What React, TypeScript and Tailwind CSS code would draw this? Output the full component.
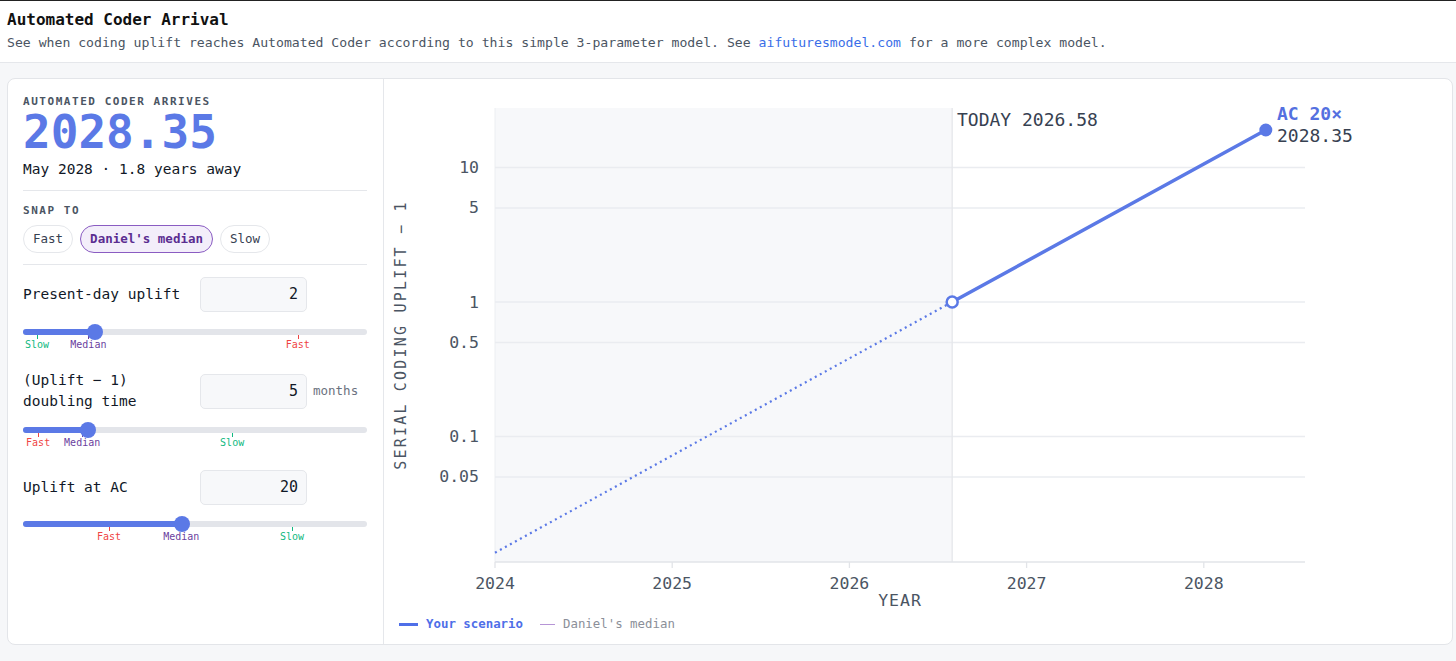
import React from 'react';

type TickKind = 'fast' | 'median' | 'slow';

const tickText: Record<TickKind, string> = {
  fast: 'text-[#ef4444]',
  median: 'text-[#6b3fa0]',
  slow: 'text-[#10b981]',
};
const tickBg: Record<TickKind, string> = {
  fast: 'bg-[#ef4444]',
  median: 'bg-[#6b3fa0]',
  slow: 'bg-[#10b981]',
};
const tickLabel: Record<TickKind, string> = { fast: 'Fast', median: 'Median', slow: 'Slow' };

type SliderProps = { value: number; ticks: { kind: TickKind; at: number }[]; className?: string };

function Slider({ value, ticks, className = 'mt-[11px]' }: SliderProps) {
  return (
    <div className={`relative h-[30px] ${className}`}>
      <div className="absolute left-0 right-0 top-[5px] h-[6px] rounded-full bg-[#e3e5ea]" />
      <div className="absolute left-0 top-[5px] h-[6px] rounded-full bg-[#5b79e6]" style={{ width: `${value}%` }} />
      {ticks.map((t) => (
        <div key={t.kind}>
          <div className={`absolute top-[11px] h-[4px] w-px ${tickBg[t.kind]}`} style={{ left: `${t.at}%` }} />
          <div
            className={`absolute top-[15px] -translate-x-1/2 text-[10px] leading-[12px] ${tickText[t.kind]}`}
            style={{ left: `${t.at}%` }}
          >
            {tickLabel[t.kind]}
          </div>
        </div>
      ))}
      <div
        className="absolute top-0 h-[16px] w-[16px] -translate-x-1/2 rounded-full bg-[#5b79e6]"
        style={{ left: `${value}%` }}
      />
    </div>
  );
}

function ParamRow({ label, value, unit }: { label: React.ReactNode; value: string; unit?: string }) {
  return (
    <div className="flex items-center">
      <div className="w-[177px] shrink-0 text-[14.5px] leading-[21px] text-[#111827]">{label}</div>
      <div className="flex h-[35px] w-[107px] items-center justify-end rounded-[5px] border border-[#e5e7eb] bg-[#f7f8fa] pr-[8px] text-[15px] text-[#111827]">
        {value}
      </div>
      {unit && <span className="ml-[6px] text-[12.5px] text-[#6b7280]">{unit}</span>}
    </div>
  );
}

const BLUE = '#5b79e6';
const xOf = (yr: number) => 495 + (yr - 2024) * 177.2;
const yOf = (v: number) => 302 - Math.log10(v) * 134.5;

function Chart() {
  const grid = [
    { v: 10, label: '10' },
    { v: 5, label: '5' },
    { v: 1, label: '1' },
    { v: 0.5, label: '0.5' },
    { v: 0.1, label: '0.1' },
    { v: 0.05, label: '0.05' },
  ];
  const years = [2024, 2025, 2026, 2027, 2028];
  const today = 2026.58;
  const tx = xOf(today);
  const startY = yOf(Math.pow(2, -((today - 2024) * 12) / 5));
  const endX = xOf(2028.35);
  const endY = yOf(19);

  return (
    <svg
      width={1068}
      height={531}
      viewBox="384 79 1068 531"
      className="block"
      style={{ fontFamily: '"DejaVu Sans Mono", monospace' }}
    >
      <rect x={495} y={108} width={tx - 495} height={454} fill="#f7f8fa" />
      <line x1={495} y1={108} x2={495} y2={562} stroke="#eceef1" strokeWidth={1} />
      {grid.map((g) => (
        <g key={g.label}>
          <line x1={495} y1={yOf(g.v)} x2={1305} y2={yOf(g.v)} stroke="#eaecf0" strokeWidth={1.3} />
          <text x={479} y={yOf(g.v)} textAnchor="end" dominantBaseline="central" fontSize={16.5} fill="#4b5563">
            {g.label}
          </text>
        </g>
      ))}
      <line x1={tx} y1={108} x2={tx} y2={562} stroke="#e5e7eb" strokeWidth={1.3} />
      <line x1={495} y1={562} x2={1305} y2={562} stroke="#e2e4e8" strokeWidth={1.5} />
      {years.map((y) => (
        <g key={y}>
          <line x1={xOf(y)} y1={562} x2={xOf(y)} y2={568} stroke="#e2e4e8" strokeWidth={1.3} />
          <text x={xOf(y)} y={583} textAnchor="middle" dominantBaseline="central" fontSize={16.5} fill="#4b5563">
            {y}
          </text>
        </g>
      ))}
      <text x={900} y={600} textAnchor="middle" dominantBaseline="central" fontSize={16.5} letterSpacing={1} fill="#4b5563">
        YEAR
      </text>
      <text
        transform="translate(401 335) rotate(-90)"
        textAnchor="middle"
        dominantBaseline="central"
        fontSize={15}
        letterSpacing={2.2}
        fill="#4b5563"
      >
        SERIAL CODING UPLIFT − 1
      </text>

      <line
        x1={495}
        y1={startY}
        x2={tx}
        y2={302}
        stroke={BLUE}
        strokeWidth={2.2}
        strokeDasharray="2 3.7"
      />
      <line x1={tx} y1={302} x2={endX} y2={endY} stroke={BLUE} strokeWidth={3.5} strokeLinecap="round" />
      <circle cx={tx} cy={302} r={5.5} fill="#fff" stroke={BLUE} strokeWidth={2.5} />
      <circle cx={endX} cy={endY} r={6.5} fill={BLUE} />

      <text x={957} y={119} dominantBaseline="central" fontSize={18} fill="#374151">
        TODAY 2026.58
      </text>
      <text x={1277} y={113} dominantBaseline="central" fontSize={18} fontWeight="bold" fill="#5470e0">
        AC 20×
      </text>
      <text x={1277} y={135} dominantBaseline="central" fontSize={18} fill="#374151">
        2028.35
      </text>
    </svg>
  );
}

export default function App() {
  return (
    <div className="min-h-[661px] border-t border-[#222] bg-[#f6f7f9] font-['DejaVu_Sans_Mono',monospace]">
      {/* Header */}
      <div className="h-[62px] border-b border-[#e5e7eb] bg-white px-[7px] pt-[9px]">
        <h1 className="text-[16px] font-bold leading-[20px] text-[#111]">Automated Coder Arrival</h1>
        <p className="mt-[4px] text-[13.15px] leading-[18px] text-[#4b5563]">
          See when coding uplift reaches Automated Coder according to this simple 3-parameter model. See{' '}
          <a className="text-[#3a6ee8]">aifuturesmodel.com</a> for a more complex model.
        </p>
      </div>

      {/* Card */}
      <div className="pt-[15px]">
        <div className="ml-[7px] mr-[3px] flex h-[567px] rounded-[8px] border border-[#e3e5e9] bg-white">
          {/* Controls */}
          <div className="w-[376px] shrink-0 border-r border-[#e5e7eb] pl-[15px] pr-[16px] pt-[16px]">
            <div className="text-[11px] font-bold leading-[14px] tracking-[0.14em] text-[#4b5563]">
              AUTOMATED CODER ARRIVES
            </div>
            <div className="text-[46px] font-bold leading-[46px] text-[#5b79e6]">2028.35</div>
            <div className="mt-[4px] text-[14.5px] leading-[20px] text-[#111827]">May 2028 · 1.8 years away</div>
            <div className="mt-[11px] border-t border-[#e5e7eb]" />
            <div className="mt-[13px] text-[11px] font-bold leading-[14px] tracking-[0.14em] text-[#4b5563]">SNAP TO</div>
            <div className="mt-[7px] flex gap-[7px]">
              <button className="h-[28px] rounded-full border border-[#e5e7eb] bg-white px-[9px] text-[12.5px] text-[#374151]">
                Fast
              </button>
              <button className="h-[28px] rounded-full border border-[#8a5cc2] bg-[#f3eefa] px-[9px] text-[12.5px] font-bold text-[#5b2d91]">
                Daniel's median
              </button>
              <button className="h-[28px] rounded-full border border-[#e5e7eb] bg-white px-[9px] text-[12.5px] text-[#374151]">
                Slow
              </button>
            </div>
            <div className="mt-[11px] border-t border-[#e5e7eb]" />

            <div className="mt-[12px]">
              <ParamRow label="Present-day uplift" value="2" />
              <Slider
                className="mt-[12px]"
                value={20.9}
                ticks={[
                  { kind: 'slow', at: 4.1 },
                  { kind: 'median', at: 19 },
                  { kind: 'fast', at: 79.9 },
                ]}
              />
            </div>

            <div className="mt-[16px]">
              <ParamRow
                label={
                  <>
                    (Uplift − 1)
                    <br />
                    doubling time
                  </>
                }
                value="5"
                unit="months"
              />
              <Slider
                className="mt-[10px]"
                value={18.9}
                ticks={[
                  { kind: 'fast', at: 4.4 },
                  { kind: 'median', at: 17.2 },
                  { kind: 'slow', at: 60.8 },
                ]}
              />
            </div>

            <div className="mt-[18px]">
              <ParamRow label="Uplift at AC" value="20" />
              <Slider
                className="mt-[11px]"
                value={46.2}
                ticks={[
                  { kind: 'fast', at: 25 },
                  { kind: 'median', at: 46 },
                  { kind: 'slow', at: 78.2 },
                ]}
              />
            </div>
          </div>

          {/* Chart */}
          <div className="flex min-w-0 flex-1 flex-col">
            <Chart />
            <div className="mt-[6px] flex items-center pl-[15px] text-[12.4px] leading-[16px]">
              <span className="h-[3px] w-[19px] bg-[#4f6fe8]" />
              <span className="ml-[8px] font-bold text-[#4f6fe8]">Your scenario</span>
              <span className="ml-[17px] h-px w-[15px] bg-[#b695d6]" />
              <span className="ml-[8px] text-[#8b8f99]">Daniel's median</span>
            </div>
          </div>
        </div>
      </div>
    </div>
  );
}
